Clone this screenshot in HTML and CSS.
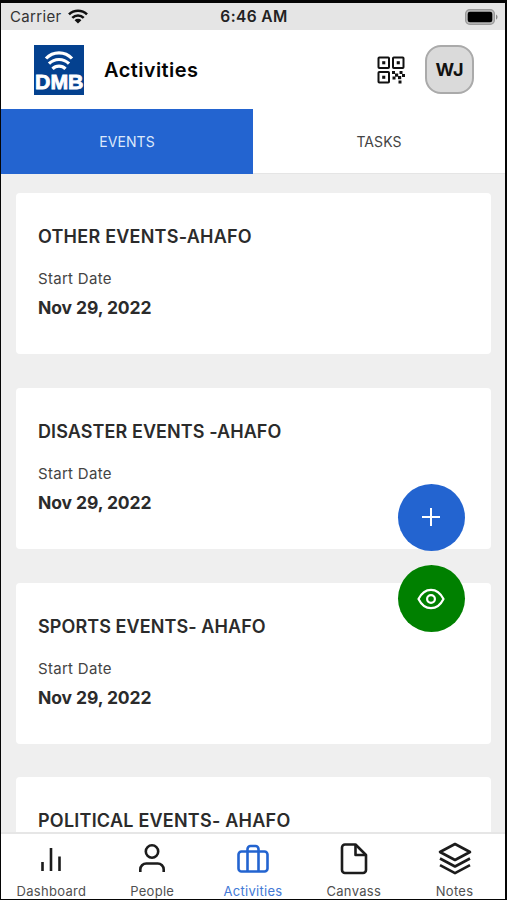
FILE: index.html
```
<!DOCTYPE html>
<html lang="en">
<head>
  <meta charset="UTF-8" />
  <meta name="viewport" content="width=device-width, initial-scale=1.0"/>
  <title>Activities</title>
  <link rel="stylesheet" href="styles.css">
</head>
<body>
<div class="screen">

  <!-- Status bar -->
  <div class="status-bar">
    <div class="carrier">
      <span>Carrier</span>
      <svg class="wifi" viewBox="0 0 20 15">
        <g fill="none" stroke="#111" stroke-width="2.6">
          <path d="M1 5.4a12.8 12.8 0 0 1 18 0"/>
          <path d="M4.3 8.9a8.1 8.1 0 0 1 11.4 0"/>
        </g>
        <path d="M10 14.6 6.6 11.2a4.8 4.8 0 0 1 6.8 0z" fill="#111"/>
      </svg>
    </div>
    <span class="time">6:46 AM</span>
    <svg class="battery" viewBox="0 0 33 16">
      <rect x="0.6" y="0.6" width="28.8" height="14.8" rx="4.2" fill="#bbb" stroke="#999" stroke-width="1.2"/>
      <rect x="2.7" y="2.7" width="24.6" height="10.6" rx="2.2" fill="#000"/>
      <path d="M31 5.4v5.2c2-1 2-4.2 0-5.2z" fill="#888"/>
    </svg>
  </div>

  <!-- Header -->
  <header class="header">
    <svg class="logo" viewBox="0 0 50 50">
      <rect width="50" height="50" fill="#04418f"/>
      <g fill="none" stroke="#fff" stroke-width="3.2">
        <path d="M12 13.5c7-7.6 19-7.6 26 0"/>
        <path d="M15 18.7c5.5-5.6 14.5-5.6 20 0"/>
        <path d="M18.5 23.8c3.5-3.6 9.5-3.6 13 0"/>
      </g>
      <text class="logo-text" x="1" y="43.5" textLength="48.5" lengthAdjust="spacingAndGlyphs">DMB</text>
    </svg>
    <h1>Activities</h1>
    <svg class="qr" viewBox="0 0 28 28">
      <g fill="none" stroke="#111" stroke-width="2">
        <rect x="1.5" y="1.5" width="10.5" height="10.5" rx="0.8"/>
        <rect x="16" y="1.5" width="10.5" height="10.5" rx="0.8"/>
        <rect x="1.5" y="16" width="10.5" height="10.5" rx="0.8"/>
      </g>
      <g fill="#111">
        <rect x="5.2" y="5.2" width="3.1" height="3.1"/>
        <rect x="19.7" y="5.2" width="3.1" height="3.1"/>
        <rect x="5.2" y="19.7" width="3.1" height="3.1"/>
        <rect x="15" y="15" width="3" height="3"/>
        <rect x="18" y="17.5" width="3.2" height="3.2"/>
        <rect x="21" y="20" width="3.2" height="3.2"/>
        <rect x="22.5" y="15" width="3" height="3"/>
        <rect x="15.5" y="20.5" width="3" height="3"/>
        <rect x="25" y="18" width="3" height="3"/>
        <rect x="21.5" y="24.5" width="3" height="3"/>
      </g>
    </svg>
    <div class="avatar">WJ</div>
  </header>

  <div class="tabs">
    <div class="tab active">EVENTS</div>
    <div class="tab">TASKS</div>
  </div>

  <!-- Events -->
  <main class="events">
    <div class="event">
      <h2 class="wide">OTHER EVENTS-AHAFO</h2>
      <p class="label">Start Date</p>
      <p class="date">Nov 29, 2022</p>
    </div>
    <div class="event">
      <h2>DISASTER EVENTS -AHAFO</h2>
      <p class="label">Start Date</p>
      <p class="date">Nov 29, 2022</p>
    </div>
    <div class="event">
      <h2>SPORTS EVENTS- AHAFO</h2>
      <p class="label">Start Date</p>
      <p class="date">Nov 29, 2022</p>
    </div>
    <div class="event">
      <h2 class="wide">POLITICAL EVENTS- AHAFO</h2>
    </div>
  </main>

  <!-- Floating buttons -->
  <div class="fabs">
    <div class="fab add">
      <svg width="19" height="19" viewBox="0 0 19 19" fill="none" stroke="#fff" stroke-width="2"><path d="M9 0v18M0 9h18"/></svg>
    </div>
    <div class="fab view">
      <svg width="31" height="24" viewBox="0 0 31 24" fill="none" stroke="#fff" stroke-width="2.2">
        <path d="M2.500 12C5.5 6 10 2.8 15 2.8S24.5 6 27.5 12C24.5 18 20 21.2 15 21.2S5.5 18 2.5 12z" stroke-linejoin="round"/>
        <circle cx="15" cy="12" r="3.9"/>
      </svg>
    </div>
  </div>

  <nav class="bottom-nav">
    <div class="nav-item">
      <svg viewBox="0 0 34 34"><path d="M8.5 21v9M17 7v23M25.5 15.5V30"/></svg>
      <span>Dashboard</span>
    </div>
    <div class="nav-item">
      <svg viewBox="0 0 34 34"><circle cx="17" cy="10.5" r="6.2"/><path d="M5.3 31v-2.5a6 6 0 0 1 6-6h11.4a6 6 0 0 1 6 6V31"/></svg>
      <span>People</span>
    </div>
    <div class="nav-item active">
      <svg viewBox="0 0 34 34"><rect x="2.5" y="10.5" width="29" height="20" rx="3"/><path d="M11.5 30.5V8a3 3 0 0 1 3-3h5a3 3 0 0 1 3 3v22.5"/></svg>
      <span>Activities</span>
    </div>
    <div class="nav-item">
      <svg viewBox="0 0 34 34"><path d="M18.5 3.5H8a3 3 0 0 0-3 3V29a3 3 0 0 0 3 3h18a3 3 0 0 0 3-3V14z"/><path d="M18.5 3.5V14H29"/></svg>
      <span>Canvass</span>
    </div>
    <div class="nav-item">
      <svg viewBox="0 0 34 34"><path d="M17 3 2 11l15 8 15-8zM2 17.5l15 8 15-8M2 24.2l15 8 15-8"/></svg>
      <span>Notes</span>
    </div>
  </nav>

</div>
</body>
</html>
```

FILE: styles.css
```
* { box-sizing: border-box; }
body { margin: 0; padding: 3px 2px 1px 1px; height: 900px; background: #050505; font-family: Inter, "Liberation Sans", sans-serif; color: #2b2b2b; overflow: hidden; }
h1, h2, p { margin: 0; }
svg { display: block; flex: none; }
.screen { height: 896px; display: flex; flex-direction: column; position: relative; background: #fff; overflow: hidden; }

.status-bar { height: 27px; flex: none; display: grid; grid-template-columns: 1fr auto 1fr; align-items: center; padding: 0 7px 0 9px; background: #e5e5e5; }
.carrier { display: flex; align-items: center; gap: 6px; font-size: 15px; letter-spacing: 0.35px; color: #333; }
.wifi { width: 20px; height: 15px; }
.time { font-size: 15.5px; font-weight: 600; letter-spacing: 0.4px; color: #222; }
.battery { width: 33px; height: 16px; justify-self: end; }

.header { height: 79px; flex: none; display: flex; align-items: center; padding: 0 31px 0 33px; }
.logo { width: 50px; height: 50px; }
.logo-text { font: bold 20px "Liberation Sans", sans-serif; fill: #fff; stroke: #fff; stroke-width: 0.8px; }
.header h1 { flex: 1; margin-left: 20px; font-size: 20px; font-weight: 600; letter-spacing: 0.4px; color: #050505; }
.qr { width: 28px; height: 28px; margin-right: 20px; }
.avatar { width: 49px; height: 49px; border: 2px solid #aaa; border-radius: 16px; background: #dadada; color: #111; display: flex; align-items: center; justify-content: center; font-size: 18px; font-weight: 700; }

.tabs { height: 65px; flex: none; display: flex; border-bottom: 1px solid #e5e5e5; }
.tab { flex: 1; display: flex; align-items: center; justify-content: center; font-size: 14px; letter-spacing: 0.1px; color: #444; }
.tab.active { background: #2364d0; color: #dce8fb; height: 65px; }

.events { flex: 1; min-height: 0; overflow: hidden; display: flex; flex-direction: column; gap: 33.8px; padding: 19px 14px 0 15px; background: #efefef; }
.event { height: 161px; flex: none; padding: 32px 22px; background: #fff; border-radius: 4px; }
.event h2 { font-size: 18px; line-height: 24px; font-weight: 600; letter-spacing: 0.08px; white-space: nowrap; }
.event h2.wide { letter-spacing: 0.23px; }
.label { margin-top: 20px; font-size: 15px; line-height: 20px; letter-spacing: 0.3px; color: #444; }
.date { margin-top: 8px; font-size: 17.5px; line-height: 22px; font-weight: 700; letter-spacing: -0.1px; }

.fabs { position: absolute; right: 40px; top: 481px; display: flex; flex-direction: column; gap: 14px; }
.fab { width: 67px; height: 67px; border-radius: 50%; display: flex; align-items: center; justify-content: center; }
.add { background: #2364d0; }
.view { background: #008000; }

.bottom-nav { height: 67px; flex: none; display: flex; border-top: 2px solid #e6e6e6; background: #fff; }
.nav-item { flex: 1; display: flex; flex-direction: column; align-items: center; padding-top: 7px; font-size: 13px; line-height: 18px; letter-spacing: 0.3px; color: #505050; white-space: nowrap; }
.nav-item svg { width: 34px; height: 34px; margin-bottom: 7px; fill: none; stroke: #1c1c1c; stroke-width: 2.6; stroke-linejoin: round; }
.nav-item.active { color: #4379d6; }
.nav-item.active svg { stroke: #2364d0; }
```
